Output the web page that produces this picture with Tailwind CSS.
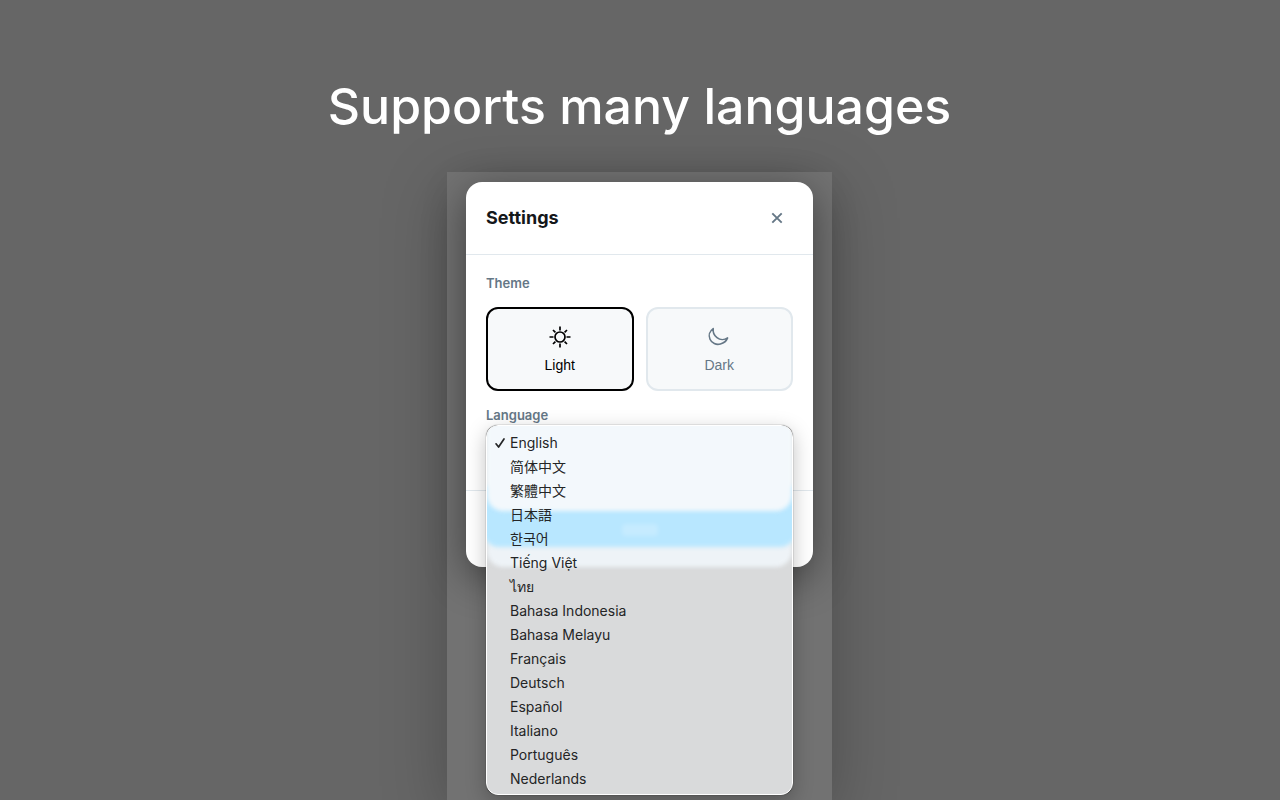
<!DOCTYPE html>
<html lang="en">
<head>
  <meta charset="UTF-8" />
  <meta name="viewport" content="width=device-width, initial-scale=1.0" />
  <title>Settings - Supports many languages</title>

  <!-- Tailwind CSS CDN -->
  <script src="https://cdn.jsdelivr.net/npm/@tailwindcss/browser@4"></script>
</head>
<body class="bg-[#666666] font-['Inter','Noto_Sans_CJK_SC',sans-serif] h-screen overflow-hidden flex flex-col items-center pr-px">

  <!-- Headline -->
  <h1 class="pt-[70px] pb-[30px] text-[50px] leading-[72px] font-medium text-white text-center">Supports many languages</h1>

  <!-- Popup window -->
  <main class="grow w-full max-w-[385px] bg-[#727272] pt-[10px] px-[19px] shadow-[0_16px_60px_rgba(0,0,0,0.25)]">

    <!-- Settings dialog -->
    <section class="relative bg-white rounded-2xl shadow-[0_10px_40px_rgba(0,0,0,0.45)]">
      <header class="flex items-center justify-between h-[73px] px-5 border-b border-[#e1e8ed]">
        <h2 class="text-lg font-bold text-[#14171a]">Settings</h2>
        <button type="button" aria-label="Close settings" class="w-8 h-8 flex items-center justify-center text-[#657786]">
          <svg class="w-3 h-3" viewBox="0 0 12 12" fill="none" stroke="currentColor" stroke-width="1.9">
            <path d="M1.3 1.3l9.4 9.4M10.7 1.3l-9.4 9.4" />
          </svg>
        </button>
      </header>

      <div class="px-5 pt-5 pb-[21px]">
        <h3 class="text-[13px] leading-4 font-semibold text-[#657786]">Theme</h3>
        <div class="grid grid-cols-2 gap-3 mt-4 font-['Liberation_Sans',sans-serif] text-sm">
          <button type="button" class="h-[84px] flex flex-col items-center justify-center gap-[6px] pt-[2px] rounded-xl border-2 border-black bg-[#f7f9fa] text-black">
            <svg class="w-6 h-6" viewBox="0 0 24 24" fill="none" stroke="currentColor" stroke-width="1.7">
              <circle cx="12" cy="12" r="5" />
              <path d="M12 1.5v4M12 18.5v4M1.5 12h4M18.5 12h4M5 5l2.4 2.4M16.6 16.6L19 19M5 19l2.4-2.4M16.6 7.4L19 5" />
            </svg>
            Light
          </button>
          <button type="button" class="h-[84px] flex flex-col items-center justify-center gap-[6px] pt-[2px] rounded-xl border-2 border-[#e1e8ed] bg-[#f7f9fa] text-[#657786]">
            <svg class="w-6 h-6" viewBox="0 0 24 24" fill="none" stroke="currentColor" stroke-width="1.6" stroke-linejoin="round">
              <path d="M6.2 3.6C2.4 6.200 1.400 10.600 3 14.200C4.800 18.300 9.200 20.200 13.400 19C17 18 19.500 15.800 20.600 12.900C17.500 15.100 13 15 10 12.700C7.200 10.500 5.700 7.200 6.200 3.600z" />
            </svg>
            Dark
          </button>
        </div>

        <label for="language" class="block mt-4 text-[13px] leading-4 font-semibold text-[#657786]">Language</label>

        <div class="relative mt-[2px]">
          <select id="language" class="w-full h-11 rounded-xl border border-[#e1e8ed] bg-[#f7f9fa] px-3 text-sm">
            <option>English</option>
          </select>

          <!-- Open language menu -->
          <div class="absolute z-10 inset-x-0 top-0 rounded-xl overflow-hidden border border-white bg-[#d9dadb] shadow-[0_0_1px_rgba(0,0,0,0.8),0_6px_20px_rgba(0,0,0,0.25)]">
            <!-- Frosted tint of the dialog below the menu -->
            <div class="absolute inset-x-0 -top-2 h-[149px] rounded-b-2xl bg-[#eef3f7] blur-[2px]"></div>
            <div class="absolute -inset-x-1 top-[60px] h-[61px] rounded-b-2xl bg-[#b8e7ff] blur-[2px]"></div>
            <div class="absolute inset-x-0 -top-2 h-[93px] rounded-b-2xl bg-[#f3f8fc] blur-[2px]"></div>
            <div class="absolute left-1/2 -translate-x-1/2 top-[98px] w-9 h-3 rounded bg-white/20 blur-[2px]"></div>

            <ul role="listbox" aria-label="Language" class="relative pt-[5px] pb-[3px] pl-[23px] text-sm leading-6 text-[#242526]">
              <li role="option" aria-selected="true" class="relative">
                <svg class="absolute -left-4 top-[6px] w-3 h-3" viewBox="0 0 12 12" fill="none" stroke="currentColor" stroke-width="1.7" stroke-linecap="round" stroke-linejoin="round">
                  <path d="M2 6.800l2.600 3.200L10 2" />
                </svg>
                English
              </li>
              <li role="option" lang="zh-CN">简体中文</li>
              <li role="option" lang="zh-TW" class="font-['Inter','Noto_Sans_CJK_TC',sans-serif]">繁體中文</li>
              <li role="option" lang="ja" class="font-['Inter','Noto_Sans_CJK_JP',sans-serif]">日本語</li>
              <li role="option" lang="ko" class="font-['Inter','Noto_Sans_CJK_KR',sans-serif]">한국어</li>
              <li role="option" lang="vi">Tiếng Việt</li>
              <li role="option" lang="th">ไทย</li>
              <li role="option">Bahasa Indonesia</li>
              <li role="option">Bahasa Melayu</li>
              <li role="option">Français</li>
              <li role="option">Deutsch</li>
              <li role="option">Español</li>
              <li role="option">Italiano</li>
              <li role="option">Português</li>
              <li role="option">Nederlands</li>
            </ul>
          </div>
        </div>
      </div>

      <footer class="px-5 py-5 border-t border-[#e1e8ed]">
        <button type="button" class="w-full h-9 rounded-xl bg-[#1d9bf0] text-sm font-semibold text-white">Close</button>
      </footer>
    </section>
  </main>

</body>
</html>
